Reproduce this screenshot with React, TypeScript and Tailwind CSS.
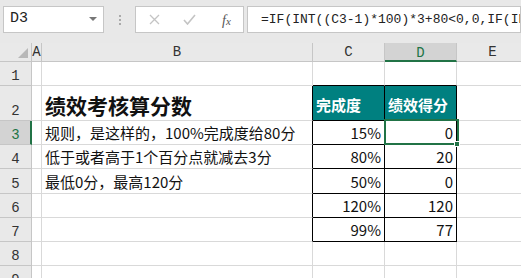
import React from "react";

const CJK = "font-['Noto_Sans_CJK_SC','Noto_Sans',sans-serif]";
const MONO = "font-['Liberation_Mono','DejaVu_Sans_Mono',monospace]";

const grid = "border-r border-b border-[#d9d9d9] bg-white";
const rowHdr = `bg-[#e9e9e9] border-r border-b border-[#c6c6c6] flex items-end justify-center pb-[2px] text-[14px] leading-none text-[#333] ${MONO}`;
const colHdr = `bg-[#e9e9e9] border-r border-b border-[#c6c6c6] flex items-center justify-center text-[14px] leading-none text-[#333] ${MONO}`;

function RowHeader({ n, sel = false }: { n: number; sel?: boolean }) {
  return sel ? (
    <div className={`bg-[#d3d3d3] border-r-2 border-r-[#217346] border-b border-[#c6c6c6] flex items-end justify-center pb-[2px] pl-[1px] text-[14px] leading-none text-[#217346] ${MONO}`}>
      {n}
    </div>
  ) : (
    <div className={rowHdr}>{n}</div>
  );
}

function Body({ children }: { children?: React.ReactNode }) {
  return (
    <div className={`${grid} border-r-black flex items-center pl-[3px] text-[15px] leading-none text-[#111] whitespace-nowrap overflow-visible ${CJK}`}>
      {children}
    </div>
  );
}

function Num({ children }: { children?: React.ReactNode }) {
  return (
    <div className={`bg-white border-r border-b border-black flex items-center justify-end pr-[3px] text-[15px] leading-none text-[#111] ${CJK}`}>
      {children}
    </div>
  );
}

export default function App() {
  return (
    <div className="w-[521px] h-[278px] overflow-hidden bg-[#e8e8e8] relative">
      {/* toolbar */}
      <div className="h-[43px] flex items-start pt-[6px] pl-[3px] gap-0">
        <div className="w-[101px] h-[27px] bg-white border border-[#c6c6c6] flex items-center justify-between pl-[6px] pr-[6px] shrink-0">
          <span className={`text-[15px] text-[#222] ${MONO}`}>D3</span>
          <span className="w-0 h-0 border-l-[4px] border-r-[4px] border-t-[4px] border-l-transparent border-r-transparent border-t-[#777] mb-[2px]"></span>
        </div>
        <div className="w-[31px] h-[27px] flex flex-col items-center justify-center gap-[2px] shrink-0">
          <span className="w-[2px] h-[2px] bg-[#aaa]"></span>
          <span className="w-[2px] h-[2px] bg-[#aaa]"></span>
          <span className="w-[2px] h-[2px] bg-[#aaa]"></span>
        </div>
        <div className="w-[109px] h-[27px] bg-white border border-[#c6c6c6] flex items-center shrink-0 relative">
          <svg className="absolute left-[13px] top-[7px]" width="11" height="11" viewBox="0 0 11 11">
            <path d="M1 1 L10 10 M10 1 L1 10" stroke="#c4c4c4" strokeWidth="1.3" />
          </svg>
          <svg className="absolute left-[47px] top-[7px]" width="13" height="11" viewBox="0 0 13 11">
            <path d="M1 6 L4.5 10 L12 1" stroke="#c4c4c4" strokeWidth="1.6" fill="none" />
          </svg>
          <span className="absolute left-[86px] top-[3px] text-[14px] italic text-[#555] font-['Liberation_Serif',serif]">
            f<span className="text-[11px]">x</span>
          </span>
        </div>
        <div className="ml-[3px] h-[27px] flex-1 bg-white border border-[#c6c6c6] flex items-center pl-[13px] whitespace-nowrap overflow-hidden">
          <span className={`text-[13px] text-[#222] ${MONO}`}>=IF(INT((C3-1)*100)*3+80&lt;0,0,IF(INT((C3-1)*100)*3+80&gt;120,120,INT((C3-1)*100)*3+80))</span>
        </div>
      </div>

      {/* sheet */}
      <div className="grid grid-cols-[32px_10px_271px_72px_72px_72px] grid-rows-[19px_24px_35px_24px_24px_25px_24px_24px_24px_24px]">
        {/* header row */}
        <div className="bg-[#e9e9e9] border-r border-b border-[#c6c6c6] relative">
          <svg className="absolute right-[3px] bottom-[3px]" width="10" height="10" viewBox="0 0 10 10">
            <path d="M10 0 L10 10 L0 10 Z" fill="#b8b8b8" />
          </svg>
        </div>
        <div className={colHdr}>A</div>
        <div className={colHdr}>B</div>
        <div className={colHdr}>C</div>
        <div className={`bg-[#d3d3d3] border-r border-[#c6c6c6] border-b-2 border-b-[#217346] flex items-center justify-center pt-[2px] text-[14px] leading-none text-[#217346] ${MONO}`}>D</div>
        <div className={colHdr}>E</div>

        {/* row 1 */}
        <RowHeader n={1} />
        <div className={grid}></div>
        <div className={grid}></div>
        <div className={`${grid} border-b-black`}></div>
        <div className={`${grid} border-b-black`}></div>
        <div className={grid}></div>

        {/* row 2 */}
        <RowHeader n={2} />
        <div className={grid}></div>
        <div className={`${grid} border-r-black flex items-end pl-[3px] pb-[4px] text-[21px] leading-none font-bold text-[#111] whitespace-nowrap ${CJK}`}>
          绩效考核算分数
        </div>
        <div className={`bg-[#008080] border-r border-b border-black flex items-end pl-[3px] pb-[8px] text-[15px] leading-none font-bold text-white ${CJK}`}>
          完成度
        </div>
        <div className={`bg-[#008080] border-r border-b border-black flex items-end pl-[3px] pb-[8px] text-[15px] leading-none font-bold text-white ${CJK}`}>
          绩效得分
        </div>
        <div className={grid}></div>

        {/* row 3 */}
        <RowHeader n={3} sel />
        <div className={grid}></div>
        <Body>规则，是这样的，100%完成度给80分</Body>
        <Num>15%</Num>
        <div className={`relative bg-white border-r border-b border-black flex items-center justify-end pr-[3px] text-[15px] leading-none text-[#111] ${CJK}`}>
          0
          <div className="absolute left-[-1px] top-[-2px] w-[75px] h-[26px] border-2 border-[#217346] pointer-events-none"></div>
          <div className="absolute left-[69px] top-[20px] w-[6px] h-[6px] bg-[#217346] border border-white z-10"></div>
        </div>
        <div className={grid}></div>

        {/* row 4 */}
        <RowHeader n={4} />
        <div className={grid}></div>
        <Body>低于或者高于1个百分点就减去3分</Body>
        <Num>80%</Num>
        <Num>20</Num>
        <div className={grid}></div>

        {/* row 5 */}
        <RowHeader n={5} />
        <div className={grid}></div>
        <Body>最低0分，最高120分</Body>
        <Num>50%</Num>
        <Num>0</Num>
        <div className={grid}></div>

        {/* row 6 */}
        <RowHeader n={6} />
        <div className={grid}></div>
        <Body />
        <Num>120%</Num>
        <Num>120</Num>
        <div className={grid}></div>

        {/* row 7 */}
        <RowHeader n={7} />
        <div className={grid}></div>
        <Body />
        <Num>99%</Num>
        <Num>77</Num>
        <div className={grid}></div>

        {/* row 8 */}
        <RowHeader n={8} />
        <div className={grid}></div>
        <div className={grid}></div>
        <div className={grid}></div>
        <div className={grid}></div>
        <div className={grid}></div>

        {/* row 9 */}
        <RowHeader n={9} />
        <div className={grid}></div>
        <div className={grid}></div>
        <div className={grid}></div>
        <div className={grid}></div>
        <div className={grid}></div>
      </div>
    </div>
  );
}
